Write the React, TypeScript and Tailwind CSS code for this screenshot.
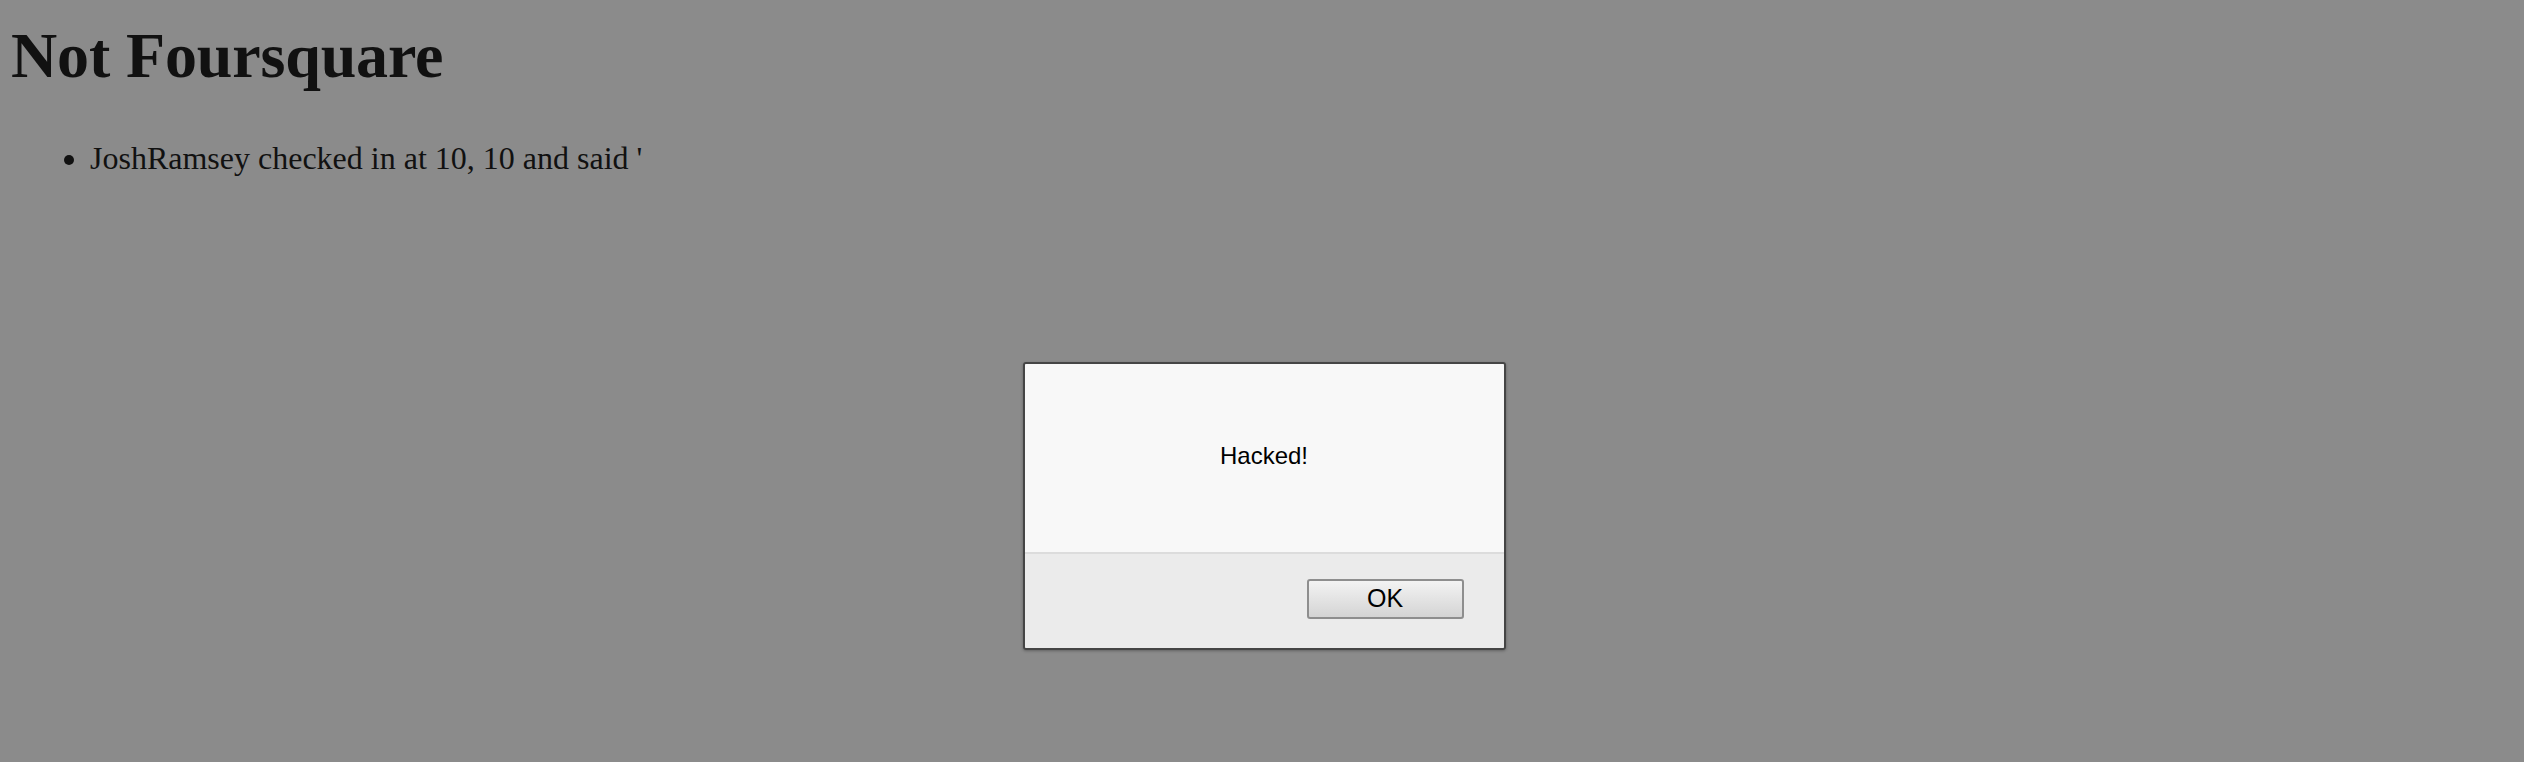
import React from 'react';

function App() {
  return (
    <div className="relative h-[762px] w-full overflow-hidden bg-[#8b8b8b] text-[#111]" style={{ fontFamily: '"Liberation Serif", "Times New Roman", serif' }}>
      <div className="pl-[11px] pt-[20px]">
        <h1 className="text-[64px] font-bold leading-[71px] tracking-[-0.15px]">Not Foursquare</h1>
        <ul className="mt-[49px] list-disc pl-[90px]">
          <li className="-ml-[11px] text-[32px] leading-[37px]">JoshRamsey checked in at 10, 10 and said '</li>
        </ul>
      </div>

      {/* alert box */}
      <div className="absolute inset-0 flex justify-center pt-[362px] pl-[4px]">
        <div
          className="flex h-[288px] w-[483px] flex-col overflow-hidden rounded-[3px] border-2 border-[#454545] shadow-[0_1px_3px_rgba(0,0,0,0.3)]"
          style={{ fontFamily: '"Liberation Sans", Arial, sans-serif' }}
        >
          <div className="flex h-[188px] items-center justify-center bg-[#f8f8f8] pb-[4px] text-[24px] text-black">
            Hacked!
          </div>
          <div className="h-[2px] bg-[#dcdcdc]" />
          <div className="flex flex-1 items-start justify-end bg-[#ebebeb] pr-[40px] pt-[25px]">
            <button className="h-[40px] w-[157px] rounded-[3px] border-2 border-[#8e8e8e] bg-gradient-to-b from-[#f3f3f3] to-[#d4d4d4] pb-[2px] text-[25px] leading-none text-black">
              OK
            </button>
          </div>
        </div>
      </div>
    </div>
  );
}

export default App;
